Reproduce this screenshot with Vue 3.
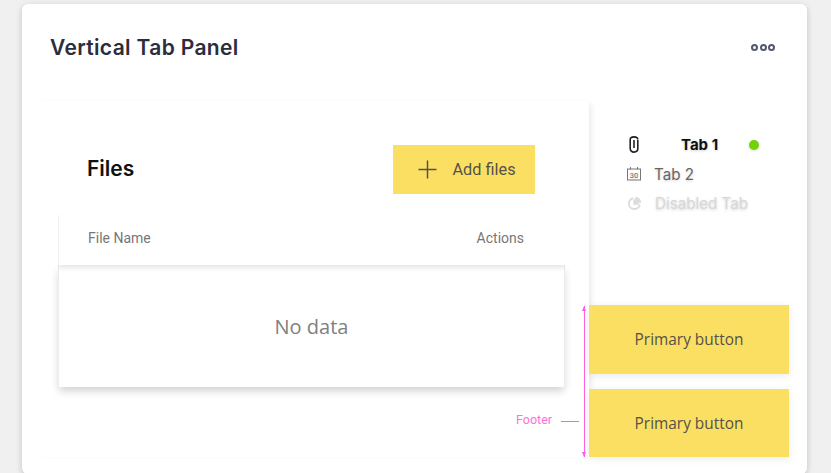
<template>
  <div class="page">
    <div class="card">
      <header class="card-head">
        <h1 class="card-title">Vertical Tab Panel</h1>
        <div class="more">
          <span class="ring"></span><span class="ring"></span><span class="ring"></span>
        </div>
      </header>
      <div class="card-body">
        <section class="panel">
          <div class="files">
            <div class="files-head">
              <h2 class="files-title">Files</h2>
              <button class="add-btn">
                <svg width="19" height="19" viewBox="0 0 19 19" fill="none" stroke="#55524a" stroke-width="1.5">
                  <path d="M9.5 0.5V18.5M0.5 9.5H18.5" />
                </svg>
                <span>Add files</span>
              </button>
            </div>
            <div class="table-head">
              <span>File Name</span>
              <span>Actions</span>
            </div>
            <div class="table-empty">No data</div>
          </div>
        </section>
        <aside class="side">
          <nav class="tabs">
            <div class="tab active">
              <svg class="tab-icon clip" width="10" height="17" viewBox="0 0 10 17" fill="none" stroke="#222" stroke-width="1.6">
                <path d="M8.8 4V12.5C8.8 14.6 7.2 16.1 5 16.1C2.8 16.1 1.2 14.6 1.2 12.5V3.6C1.2 2 2.8 0.9 5 0.9C7.2 0.9 8.8 2 8.8 3.6" />
                <path d="M5 4V12" />
              </svg>
              <span class="tab-label">Tab 1</span>
              <span class="dot"></span>
            </div>
            <div class="tab">
              <svg class="tab-icon" width="14" height="14" viewBox="0 0 14 14" fill="none" stroke="#777" stroke-width="1">
                <rect x="0.5" y="2" width="13" height="11" />
                <path d="M3.5 0V2.5M10.5 0V2.5" />
                <text x="7" y="10.8" text-anchor="middle" font-size="7.5" fill="#666" stroke="none" font-family="Roboto, sans-serif">30</text>
              </svg>
              <span>Tab 2</span>
            </div>
            <div class="tab disabled">
              <svg class="tab-icon" width="15" height="15" viewBox="0 0 15 15" fill="none" stroke="#dcdcdc" stroke-width="2">
                <path d="M6.3 2.2A5.5 5.5 0 1 0 12.8 8.7" />
                <path d="M8.2 0.8A6 6 0 0 1 14.2 6.8H8.2Z" fill="#dcdcdc" stroke="none" />
                <path d="M6.3 2.2V8.7H12.8Z" fill="#dcdcdc" stroke="none" />
              </svg>
              <span>Disabled Tab</span>
            </div>
          </nav>
          <div class="footer">
            <button class="primary">Primary button</button>
            <button class="primary">Primary button</button>
            <div class="note">
              <span class="note-text">Footer</span>
              <span class="note-dash"></span>
              <span class="note-arrow"></span>
            </div>
          </div>
        </aside>
      </div>
    </div>
  </div>
</template>

<script setup>
</script>

<style>
html, body { margin: 0; background: #f0f0f0; overflow: hidden; }
</style>

<style scoped>
.page { width: 831px; height: 473px; padding: 4px 0 0 22px; box-sizing: border-box; overflow: hidden; font-family: Inter, "Liberation Sans", sans-serif; }
.card { width: 785px; height: 470px; background: #fff; border-radius: 6px; box-shadow: 0 2px 6px rgba(0, 0, 0, 0.2); display: flex; flex-direction: column; overflow: hidden; }
.card-head { height: 97px; flex: none; display: flex; justify-content: space-between; padding: 32px 32px 0 28px; box-sizing: border-box; }
.card-title { margin: 0; font-size: 21px; line-height: 24px; font-weight: 600; color: #2b2d3c; letter-spacing: 0.35px; }
.more { display: flex; gap: 1.5px; height: 8px; margin-top: 8px; }
.ring { width: 7px; height: 7px; box-sizing: border-box; border: 2px solid #55596c; border-radius: 50%; }
.card-body { flex: 1; display: flex; padding-left: 11px; min-height: 0; }
.panel { width: 556px; height: 356px; flex: none; padding: 25px 24px 0 25px; box-sizing: border-box; background: #fff; border-radius: 3px; box-shadow: 5px 0 6px -3px rgba(0, 0, 0, 0.09); }
.files { width: 507px; }
.files-head { height: 89px; display: flex; justify-content: space-between; align-items: flex-start; padding: 19px 30px 0 29px; box-sizing: border-box; }
.files-title { margin: 0; padding-top: 11px; font-size: 21px; line-height: 26px; font-weight: 600; color: #111; }
.add-btn { width: 142.5px; height: 49px; border: 0; background: #fbdf62; color: #55524a; font-family: Roboto, sans-serif; font-size: 16.3px; display: flex; align-items: center; gap: 16px; padding: 0 0 0 25px; }
.table-head { height: 50px; display: flex; justify-content: space-between; align-items: center; padding: 0 41px 4px 29px; font-family: Roboto, sans-serif; font-size: 14px; color: #777; background: #fff; box-shadow: 0 2px 6px rgba(0, 0, 0, 0.13); position: relative; z-index: 1; border-left: 1px solid #f0f0f0; box-sizing: border-box; clip-path: inset(0 0 -10px 0); }
.table-empty { height: 122px; display: flex; align-items: center; justify-content: center; font-family: "Open Sans", sans-serif; font-size: 20px; color: #808080; background: #fff; border: solid #ececec; border-width: 0 1px; box-sizing: border-box; box-shadow: 0 5px 8px -1px rgba(0, 0, 0, 0.18); }
.side { flex: 1; display: flex; flex-direction: column; min-width: 0; }
.tabs { padding: 29px 0 0 38px; height: 204px; box-sizing: border-box; font-size: 15.2px; color: #666; }
.tab { height: 29.5px; display: flex; align-items: center; gap: 13px; position: relative; text-shadow: 0 1px 3px rgba(0, 0, 0, 0.18); }
.tab-icon { flex: none; }
.tab-icon.clip { margin-left: 2px; }
.tab.active { font-weight: 700; color: #111; font-size: 15px; gap: 0; }
.tab.active .tab-label { margin-left: 42px; }
.dot { position: absolute; left: 122px; top: 10px; width: 10px; height: 10px; border-radius: 50%; background: #72d20a; box-shadow: 0 1px 3px rgba(0, 0, 0, 0.15); }
.tab.disabled { color: #d8d8d8; }
.footer { display: flex; flex-direction: column; gap: 15px; position: relative; }
.primary { width: 200px; height: 69px; border: 0; background: #fbdf62; color: #55524a; font-family: "Open Sans", sans-serif; font-size: 15.4px; box-shadow: 0 2px 8px rgba(0, 0, 0, 0.08); }
.primary:nth-child(2) { height: 68px; }
.note { position: absolute; left: -90px; top: 0; width: 90px; height: 153px; color: #ff6fd8; }
.note-text { position: absolute; left: 17px; top: 107px; font-family: Roboto, sans-serif; font-size: 12.5px; }
.note-dash { position: absolute; left: 62px; top: 116px; width: 18px; height: 1px; background: #ff5fe0; }
.note-arrow { position: absolute; left: 84.5px; top: 1px; width: 1.5px; height: 151px; background: #ff5fe0; }
.note-arrow::before, .note-arrow::after { content: ""; position: absolute; left: -2px; border-left: 2.75px solid transparent; border-right: 2.75px solid transparent; }
.note-arrow::before { top: 0; border-bottom: 5px solid #ff5fe0; }
.note-arrow::after { bottom: 0; border-top: 5px solid #ff5fe0; }
</style>
